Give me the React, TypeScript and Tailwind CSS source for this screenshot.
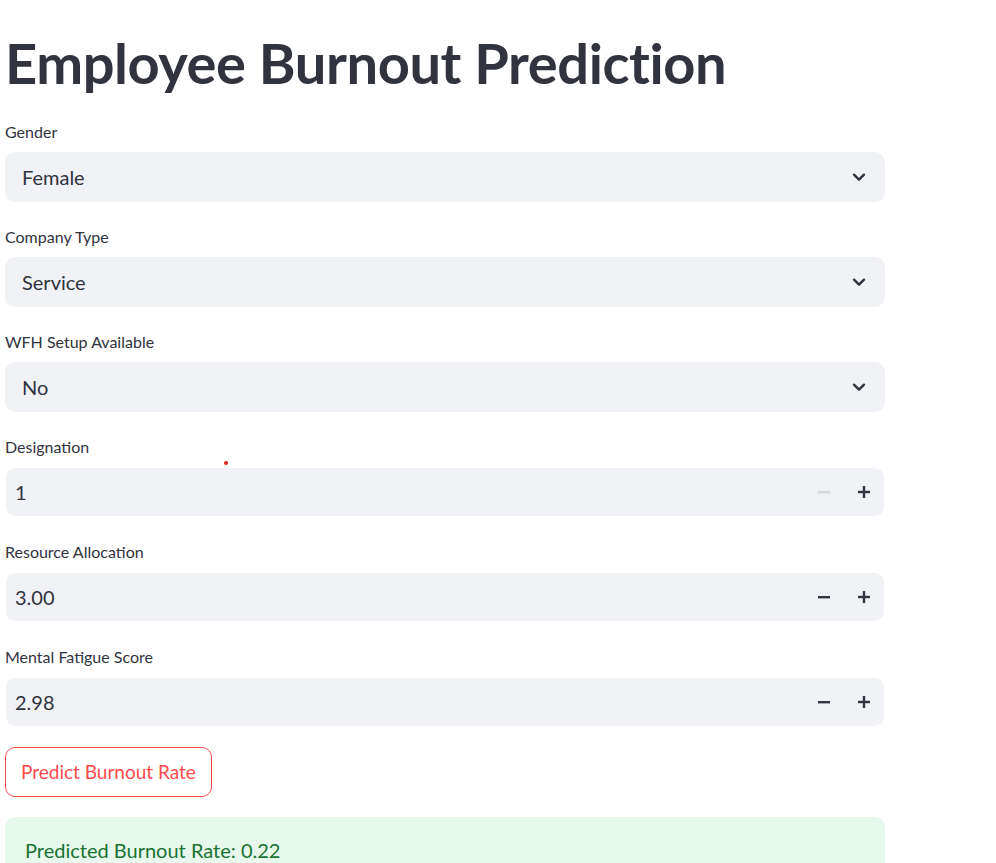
import React from "react";

const font = { fontFamily: "Lato, 'Noto Sans', sans-serif" };

const Chevron = () => (
  <svg width="16" height="16" viewBox="0 0 24 24" fill="none" stroke="#31333f" strokeWidth="3.6" strokeLinecap="round" strokeLinejoin="round">
    <path d="M4.5 8.5l7.5 7.5 7.5-7.5" />
  </svg>
);

const Minus = ({ disabled }: { disabled?: boolean }) => (
  <svg width="12" height="12" viewBox="0 0 12 12">
    <rect x="0" y="5" width="12" height="2.4" fill={disabled ? "#d5d7dc" : "#31333f"} />
  </svg>
);

const Plus = () => (
  <svg width="12" height="12" viewBox="0 0 12 12" fill="#31333f">
    <rect x="0" y="4.8" width="12" height="2.4" />
    <rect x="4.8" y="0" width="2.4" height="12" />
  </svg>
);

const Label: React.FC<{ text: string }> = ({ text }) => (
  <div className="h-[30px] mb-[5px] flex items-center text-[16px] text-[#31333f]">{text}</div>
);

const SelectBox: React.FC<{ label: string; value: string }> = ({ label, value }) => (
  <div>
    <Label text={label} />
    <div className="h-[50px] rounded-[10px] bg-[#f0f2f6] flex items-center justify-between pl-[17px] pr-[18px]">
      <span className="text-[20px] text-[#31333f]">{value}</span>
      <Chevron />
    </div>
  </div>
);

const NumberBox: React.FC<{ label: string; value: string; minDisabled?: boolean }> = ({ label, value, minDisabled }) => (
  <div>
    <Label text={label} />
    <div className="h-[50px] rounded-[10px] bg-[#f0f2f6] bg-clip-padding border border-white flex items-center">
      <span className="flex-1 pl-[9px] text-[20px] text-[#31333f]">{value}</span>
      <button className="w-[40px] h-full flex items-center justify-center">
        <Minus disabled={minDisabled} />
      </button>
      <button className="w-[40px] h-full flex items-center justify-center">
        <Plus />
      </button>
    </div>
  </div>
);

export default function App() {
  return (
    <div className="relative min-h-[863px] bg-white overflow-hidden" style={font}>
      <div className="ml-[5px] w-[880px] flex flex-col">
        <h1 className="pt-[30px] h-[117px] text-[56px] font-bold leading-[66px] text-[#31333f] tracking-[-0.4px]">
          Employee Burnout Prediction
        </h1>
        <div className="flex flex-col gap-[20px]">
          <SelectBox label="Gender" value="Female" />
          <SelectBox label="Company Type" value="Service" />
          <SelectBox label="WFH Setup Available" value="No" />
          <NumberBox label="Designation" value="1" minDisabled />
          <NumberBox label="Resource Allocation" value="3.00" />
          <NumberBox label="Mental Fatigue Score" value="2.98" />
          <div>
            <button className="h-[50px] px-[15px] rounded-[10px] border border-[#ff4b4b] text-[19px] text-[#ff4b4b] bg-white">
              Predict Burnout Rate
            </button>
          </div>
          <div className="rounded-[10px] bg-[#e7f8ec] px-[20px] pt-[18px] pb-[20px] text-[20px] text-[#177233]">
            Predicted Burnout Rate: 0.22
          </div>
        </div>
      </div>
      <div className="absolute left-[224px] top-[461px] w-[4px] h-[4px] rounded-full bg-[#e0201c]" />
    </div>
  );
}
